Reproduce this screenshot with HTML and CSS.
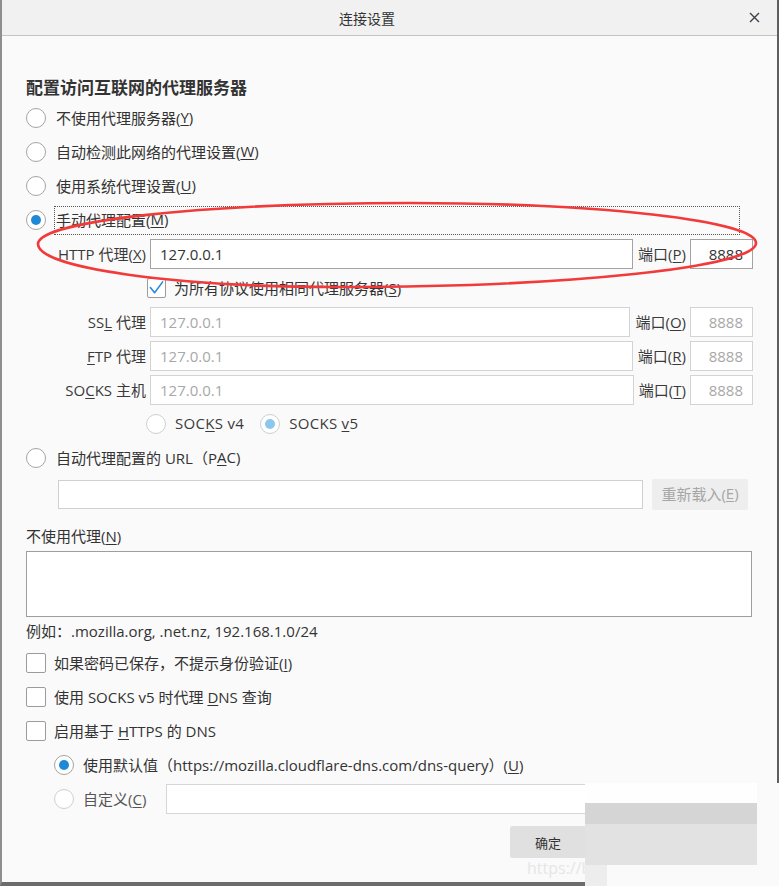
FILE: index.html
```html
<!DOCTYPE html>
<html lang="zh-CN">
<head>
<meta charset="utf-8">
<title>连接设置</title>
<link rel="stylesheet" href="styles.css">
</head>
<body>
<div class="dialog">
  <div class="header">
    <div class="title">连接设置</div>
    <div class="close">
      <svg width="11" height="11" viewBox="0 0 11 11"><path d="M1 1 L10 10 M10 1 L1 10" stroke="#3c4048" stroke-width="1.4" fill="none"/></svg>
    </div>
  </div>
  <div class="content">
    <div class="heading">配置访问互联网的代理服务器</div>

    <div class="row"><span class="radio"></span><span class="opt">不使用代理服务器(<u>Y</u>)</span></div>
    <div class="row"><span class="radio"></span><span class="opt">自动检测此网络的代理设置(<u>W</u>)</span></div>
    <div class="row"><span class="radio"></span><span class="opt">使用系统代理设置(<u>U</u>)</span></div>
    <div class="row"><span class="radio on"></span><span class="opt focus">手动代理配置(<u>M</u>)</span></div>

    <div class="prow">
      <span class="plabel">HTTP 代理(<u>X</u>)</span>
      <span class="pinput">127.0.0.1</span>
      <span class="port-l">端口(<u>P</u>)</span>
      <span class="port">8888</span>
    </div>

    <div class="row same">
      <span class="cb">
        <svg width="18" height="18" viewBox="0 0 18 18"><path d="M2.5 8.5 L7 14 L15.5 2.5" stroke="#2a8ade" stroke-width="1.7" fill="none" stroke-linecap="round" stroke-linejoin="round"/></svg>
      </span>
      <span class="cb-text">为所有协议使用相同代理服务器(<u>S</u>)</span>
    </div>

    <div class="prow">
      <span class="plabel">SS<u>L</u> 代理</span>
      <span class="pinput dis">127.0.0.1</span>
      <span class="port-l">端口(<u>O</u>)</span>
      <span class="port dis">8888</span>
    </div>
    <div class="prow">
      <span class="plabel"><u>F</u>TP 代理</span>
      <span class="pinput dis">127.0.0.1</span>
      <span class="port-l">端口(<u>R</u>)</span>
      <span class="port dis">8888</span>
    </div>
    <div class="prow">
      <span class="plabel">SO<u>C</u>KS 主机</span>
      <span class="pinput dis">127.0.0.1</span>
      <span class="port-l">端口(<u>T</u>)</span>
      <span class="port dis">8888</span>
    </div>

    <div class="row socks">
      <span class="radio dis"></span><span class="sv">SOC<u>K</u>S v4</span>
      <span class="radio dis on v5"></span><span class="sv">SOCKS <u>v</u>5</span>
    </div>

    <div class="row"><span class="radio"></span><span class="opt">自动代理配置的 URL（P<u>A</u>C)</span></div>

    <div class="pac">
      <span class="pac-input"></span>
      <span class="reload">重新载入(<u>E</u>)</span>
    </div>

    <div class="np-label">不使用代理(<u>N</u>)</div>
    <div class="textarea"></div>
    <div class="example">例如：.mozilla.org, .net.nz, 192.168.1.0/24</div>

    <div class="row"><span class="cb"></span><span class="cb-text">如果密码已保存，不提示身份验证(<u>I</u>)</span></div>
    <div class="row"><span class="cb"></span><span class="cb-text">使用 SOCKS v5 时代理 <u>D</u>NS 查询</span></div>
    <div class="row"><span class="cb"></span><span class="cb-text">启用基于 <u>H</u>TTPS 的 DNS</span></div>

    <div class="row doh"><span class="radio on"></span><span class="doh-t">使用默认值（https://mozilla.cloudflare-dns.com/dns-query）(<u>U</u>)</span></div>
    <div class="row doh"><span class="radio dis"></span><span class="doh-t custom-l">自定义(<u>C</u>)</span><span class="custom-input"></span></div>

    <div class="footer"><span class="ok">确定</span></div>
  </div>
</div>

<div class="watermark">https://blog.csdn.net</div>

<svg class="annot" width="779" height="886" viewBox="0 0 779 886">
  <path d="M38 244 C38 221 205 203 410 203 C601 203 756 221 756 243 C756 267 569 287 340 287 C174 287 38 268 38 244 Z" fill="none" stroke="#f23a3a" stroke-width="2.6"/>
</svg>

<div class="cover">
  <div class="c1"></div>
  <div class="c2"></div>
  <div class="c3"></div>
  <div class="c4"></div>
</div>
</body>
</html>
```
FILE: styles.css
```css
* { box-sizing: border-box; }
html, body { margin: 0; padding: 0; }
body {
  width: 779px;
  height: 886px;
  overflow: hidden;
  position: relative;
  background: #fafafa;
  font-family: "Open Sans", "Noto Sans CJK SC", sans-serif;
  font-size: 15px;
  color: #333;
}
u { text-decoration: underline; text-underline-offset: 2px; }

.dialog {
  height: 886px;
  border-left: 2px solid #8e8e8e;
  border-right: 2px solid #5e5e5e;
  border-bottom: 4px solid #6b6b6b;
  display: flex;
  flex-direction: column;
}
.header {
  height: 36px;
  flex: none;
  background: #f1f1f1;
  border-bottom: 1px solid #c4c4c4;
  display: flex;
  align-items: center;
}
.title { flex: 1; text-align: center; font-size: 14px; color: #333; }
.close { width: 45px; display: flex; justify-content: center; }

.content { padding: 0 24px; }
.heading {
  margin-top: 39px;
  height: 26px;
  line-height: 26px;
  font-size: 17px;
  font-weight: bold;
  color: #333;
}

.row { height: 34px; display: flex; align-items: center; }

.radio {
  width: 20px; height: 20px;
  border-radius: 50%;
  border: 1px solid #a4a4a4;
  background: #fff;
  flex: none;
  display: flex; align-items: center; justify-content: center;
}
.radio.on::after {
  content: "";
  width: 10px; height: 10px;
  border-radius: 50%;
  background: #1e8ad6;
}
.radio.dis { border-color: #cfcfcf; }
.radio.dis.on::after { background: #8cc6ec; }

.opt {
  margin-left: 8px;
  padding: 0 1px 2px;
  height: 29px;
  border: 1px solid transparent;
  display: flex; align-items: center;
  white-space: nowrap;
}
.opt.focus { flex: 1; border: 1px dotted #555; margin-right: 13px; }

.prow { height: 34px; display: flex; align-items: center; }
.plabel { width: 124px; flex: none; text-align: right; padding: 0 4px 2px 0; white-space: nowrap; color: #3a3a3a; }
.pinput {
  flex: 1;
  height: 30px;
  border: 1px solid #a3a3a3;
  background: #fff;
  padding: 0 0 1px 9px;
  display: flex; align-items: center;
  color: #333;
}
.pinput.dis { border-color: #d3d3d3; color: #a8a8a8; }
.port-l { margin: 0 4px 0 5px; padding-bottom: 2px; white-space: nowrap; color: #3a3a3a; }
.port {
  width: 63px; flex: none;
  height: 30px;
  border: 1px solid #a3a3a3;
  background: #fff;
  padding: 0 9px 1px 0;
  display: flex; align-items: center; justify-content: flex-end;
  color: #333;
}
.port.dis { border-color: #d3d3d3; color: #a8a8a8; }

.cb {
  width: 20px; height: 20px;
  border: 1px solid #9c9c9c;
  border-radius: 2px;
  background: #fff;
  flex: none;
  display: flex; align-items: center; justify-content: center;
}
.cb-text { margin-left: 8px; padding-bottom: 2px; white-space: nowrap; }
.same { padding-left: 121px; }
.same .cb { width: 19px; height: 20px; }

.socks { padding-left: 120px; }
.sv { margin-left: 9px; padding-bottom: 2px; color: #3a3a3a; white-space: nowrap; letter-spacing: 0.3px; }
.radio.v5 { margin-left: 16px; }

.pac { height: 38px; display: flex; align-items: center; padding-left: 32px; padding-right: 5px; }
.pac-input { flex: 1; height: 29px; border: 1px solid #d0d0d0; background: #fff; }
.reload {
  margin-left: 9px;
  width: 96px; height: 31px;
  padding-bottom: 2px;
  background: #eeeeee;
  color: #a6a6a6;
  border-radius: 2px;
  display: flex; align-items: center; justify-content: center;
  white-space: nowrap;
}

.np-label { margin-top: 10px; height: 28px; line-height: 26px; }
.textarea { height: 66px; margin-right: 1px; border: 1px solid #9e9e9e; background: #fff; }
.example { margin-top: 1px; height: 28px; line-height: 27px; white-space: nowrap; }

.doh { padding-left: 28px; }
.doh-t { margin-left: 9px; padding-bottom: 2px; white-space: nowrap; }
.custom-l { width: 83px; flex: none; color: #555; }
.custom-input { flex: 1; height: 30px; border: 1px solid #d6d6d6; background: #fff; margin-right: 1px; }

.footer { margin-top: 10px; height: 32px; display: flex; justify-content: flex-end; padding-right: 167px; }
.ok {
  width: 76px; height: 32px;
  background: #e0e0e0;
  border-radius: 2px;
  font-size: 13px;
  color: #333;
  display: flex; align-items: center; justify-content: center;
}

.watermark {
  position: absolute;
  left: 527px; top: 856px;
  font-size: 16px;
  line-height: 24px;
  color: #e6e6e6;
  white-space: nowrap;
}
.annot { position: absolute; left: 0; top: 0; pointer-events: none; }

.cover {
  position: absolute;
  left: 585px; top: 783px;
  width: 194px; height: 103px;
  background: #fafafa;
}
.c1 { width: 172px; height: 20px; background: #fefefe; }
.c2 { width: 172px; height: 21px; background: #d5d5d5; }
.c3 { width: 172px; height: 41px; background: #e2e2e2; }
.c4 { width: 22px; height: 21px; background: #ededed; }
```
